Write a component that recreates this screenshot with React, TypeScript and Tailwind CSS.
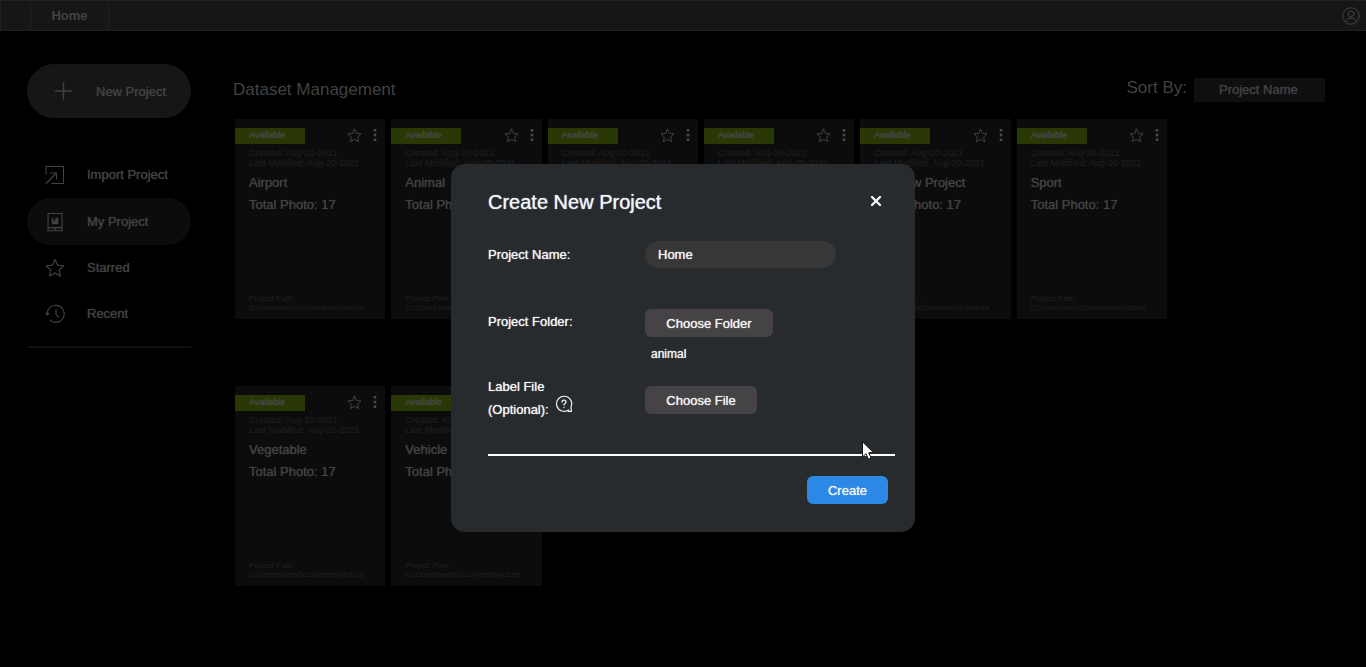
import { useState } from "react";
import type { ReactNode } from "react";

const projects = ["Airport", "Animal", "Fruit", "Home", "My New Project", "Sport", "Vegetable", "Vehicle"];

function Icon({ children, className }: { children: ReactNode; className: string }) {
  return (
    <svg
      viewBox="0 0 20 20"
      fill="none"
      stroke="currentColor"
      strokeWidth="1.1"
      strokeLinecap="round"
      strokeLinejoin="round"
      aria-hidden="true"
      className={className}
    >
      {children}
    </svg>
  );
}

const starPath = "M10 1.5 12.6 7.1 18.7 7.8 14.2 12 15.4 18.1 10 15.1 4.6 18.1 5.8 12 1.3 7.8 7.4 7.1Z";

function NavItem({ icon, label, active }: { icon: ReactNode; label: string; active?: boolean }) {
  return (
    <button
      type="button"
      className={`flex w-full items-center gap-[22px] rounded-full pl-[18px] text-left [text-shadow:0_0_1px_currentColor] ${active ? "h-[47px] bg-[#0c0c0c]" : "h-[46px]"}`}
    >
      <Icon className="size-5 shrink-0">{icon}</Icon>
      <span>{label}</span>
    </button>
  );
}

function ProjectCard({ name }: { name: string }) {
  return (
    <article className="flex h-[200px] min-w-0 flex-col bg-[#0c0c0c] pt-[9px] pb-[7px]">
      <div className="flex h-4 items-start">
        <span className="h-4 w-[70px] bg-[#2a3806] pl-3.5 text-[9px] leading-[15px] text-[#484848] [text-shadow:0_0_1px_currentColor]">
          Available
        </span>
        <button type="button" aria-label={`Star ${name}`} className="ml-auto text-[#4c4c4c]">
          <Icon className="size-[15px]">
            <path d={starPath} />
          </Icon>
        </button>
        <button type="button" aria-label={`Options for ${name}`} className="mr-2 ml-[11px] pt-px text-[#4a4a4a]">
          <svg viewBox="0 0 4 12" fill="currentColor" className="h-3 w-1" aria-hidden="true">
            <path d="M.7 0H3.3V2.6H.7ZM.7 4.7H3.3V7.3H.7ZM.7 9.4H3.3V12H.7Z" />
          </svg>
        </button>
      </div>
      <div className="flex grow flex-col pl-3.5 whitespace-nowrap">
        <p className="mt-1 text-[9px] leading-[10px] text-[#202020]">
          Created: Aug-20-2021
          <br />
          Last Modified: Aug-20-2021
        </p>
        <h2 className="mt-1 text-[13px] leading-[22px] [text-shadow:0_0_1px_currentColor]">{name}</h2>
        <p className="text-[13px] leading-[21px] [text-shadow:0_0_1px_currentColor]">Total Photo: 17</p>
        <p className="mt-auto text-[8px] leading-[9px] text-[#202020]">
          Project Path :
          <br />
          C:\Users\ken\Documents\picture
        </p>
      </div>
    </article>
  );
}

function CreateDialog() {
  const [name, setName] = useState("Home");
  return (
    <div className="fixed inset-0 flex items-center justify-center pt-[29px]">
      <div
        role="dialog"
        aria-labelledby="dialog-title"
        className="relative w-[464px] rounded-[14px] bg-[#272b2d] pt-[25px] pr-5 pb-7 pl-[37px] text-[13px] font-medium text-[#f4f4f4] [text-shadow:0_0_1px_currentColor]"
      >
        <div className="flex h-6 items-center justify-between pr-3">
          <h1 id="dialog-title" className="pt-px text-xl leading-6 text-[#eef4fa]">Create New Project</h1>
          <button type="button" aria-label="Close" className="p-px">
            <svg viewBox="0 0 12 12" stroke="currentColor" strokeWidth="2.4" strokeLinecap="round" className="size-3" aria-hidden="true">
              <path d="M2 2 10 10M10 2 2 10" />
            </svg>
          </button>
        </div>
        <form onSubmit={(e) => e.preventDefault()}>
          <div className="mt-7 grid grid-cols-[157px_1fr] items-start">
            <label htmlFor="project-name" className="leading-[27px]">Project Name:</label>
            <input
              id="project-name"
              value={name}
              onChange={(e) => setName(e.target.value)}
              className="h-[27px] w-[191px] rounded-full bg-[#373737] px-[13px] outline-none [text-shadow:0_0_1px_currentColor]"
            />
          </div>
          <div className="mt-[41px] grid grid-cols-[157px_1fr] items-start">
            <label htmlFor="project-folder" className="leading-[26px]">Project Folder:</label>
            <div>
              <button id="project-folder" type="button" className="h-7 w-32 rounded-md bg-[#454345] pt-px [text-shadow:0_0_1px_currentColor]">
                Choose Folder
              </button>
              <p className="mt-2 pl-1.5 text-xs leading-[18px]">animal</p>
            </div>
          </div>
          <div className="mt-3 grid grid-cols-[157px_1fr] items-start">
            <div className="flex items-end gap-1.5">
              <label htmlFor="label-file" className="leading-[23px]">
                Label File
                <br />
                (Optional):
              </label>
              <Icon className="mb-2 size-[18px]">
                <path d="M15.2 16.5A8.4 8.4 0 1 1 17.8 13.2M17.8 13.2 18.2 18.2H14.6" strokeWidth="1.3" />
                <path d="M7.8 7.7C7.8 4.9 12.2 4.9 12.2 7.7 12.2 9.4 10 9.4 10 11.2M10 13.8V14" strokeWidth="1.4" />
              </Icon>
            </div>
            <button id="label-file" type="button" className="mt-[11px] h-7 w-28 rounded-md bg-[#454345] pt-px [text-shadow:0_0_1px_currentColor]">
              Choose File
            </button>
          </div>
          <hr className="mt-[33px] border-t-2 border-white" />
          <div className="mt-5 flex justify-end pr-[7px]">
            <button type="submit" className="h-7 w-[81px] rounded-md bg-[#2b88e6] pt-px [text-shadow:0_0_1px_currentColor]">
              Create
            </button>
          </div>
        </form>
        <svg viewBox="0 0 12 19" className="absolute right-[41px] bottom-[72px] h-[19px] w-3" aria-hidden="true">
          <path d="M.5 .8V16L4 12.7 6.3 18.2 9 17 6.7 11.7H11.5Z" fill="#fff" stroke="#111" strokeWidth="1" />
        </svg>
      </div>
    </div>
  );
}

export default function App() {
  return (
    <div className="min-h-screen bg-black font-['Liberation_Sans',Arial,sans-serif] text-[13px] text-[#424242]">
      <header className="flex h-[31px] items-stretch border border-r-0 border-[#212121] bg-[#161616]">
        <div className="w-[29px]" />
        <a href="#home" className="flex w-[79px] items-center justify-center border-x border-[#212121] font-bold">Home</a>
        <button type="button" aria-label="Account" className="mr-1.5 ml-auto">
          <Icon className="size-[18px]">
            <circle cx="10" cy="10" r="9.2" />
            <circle cx="10" cy="7.7" r="3.2" />
            <path d="M4.2 17C4.2 10.8 15.8 10.8 15.8 17" />
          </Icon>
        </button>
      </header>

      <div className="flex pt-[33px] pl-[27px]">
        <aside className="w-[164px] shrink-0 font-medium">
          <button
            type="button"
            className="flex h-[54px] w-full items-center gap-[23px] rounded-full bg-[#161616] pl-[26px] [text-shadow:0_0_1px_currentColor]"
          >
            <Icon className="size-5">
              <path d="M10.5 2V18M2.5 10H18.5" strokeWidth="1.4" />
            </Icon>
            <span className="pt-px">New Project</span>
          </button>
          <nav className="mt-[34px] border-b-2 border-[#101010] pb-[9px]">
            <NavItem
              label="Import Project"
              icon={<path d="M1 9V1.5H18.5V18.5H7M1 18.5 11.5 8M5.5 8H11.5V14" />}
            />
            <NavItem
              active
              label="My Project"
              icon={
                <>
                  <path d="M3 1.5H17V18.8H3ZM3 15.6H17M9 17.2H11" />
                  <path d="M7 6V12H13V6H10.5V8.5L9.5 9.5 8.5 8Z" fill="currentColor" strokeWidth=".4" />
                </>
              }
            />
            <NavItem label="Starred" icon={<path d={starPath} />} />
            <NavItem
              label="Recent"
              icon={<path d="M2.2 11A8.5 8.5 0 1 1 5 16.2M.8 8.8 2.2 11 4.2 9.2M11 5.5V10.5L13.4 13.2" />}
            />
          </nav>
        </aside>

        <main className="grow pr-[41px] pl-11">
          <div className="flex h-[52px] items-center justify-between">
            <h1 className="-ml-0.5 text-[17px]">Dataset Management</h1>
            <div className="flex items-center gap-[7px]">
              <label htmlFor="sort" className="pb-1 text-[17px]">Sort By:</label>
              <select
                id="sort"
                defaultValue="name"
                className="h-6 w-[131px] appearance-none bg-[#0f0f0f] pl-[25px] font-medium [text-shadow:0_0_1px_currentColor]"
              >
                <option value="name">Project Name</option>
              </select>
            </div>
          </div>
          <div className="mt-[3px] mr-[158px] grid grid-cols-6 gap-x-1.5 gap-y-[67px]">
            {projects.map((name) => (
              <ProjectCard key={name} name={name} />
            ))}
          </div>
        </main>
      </div>
      <CreateDialog />
    </div>
  );
}
